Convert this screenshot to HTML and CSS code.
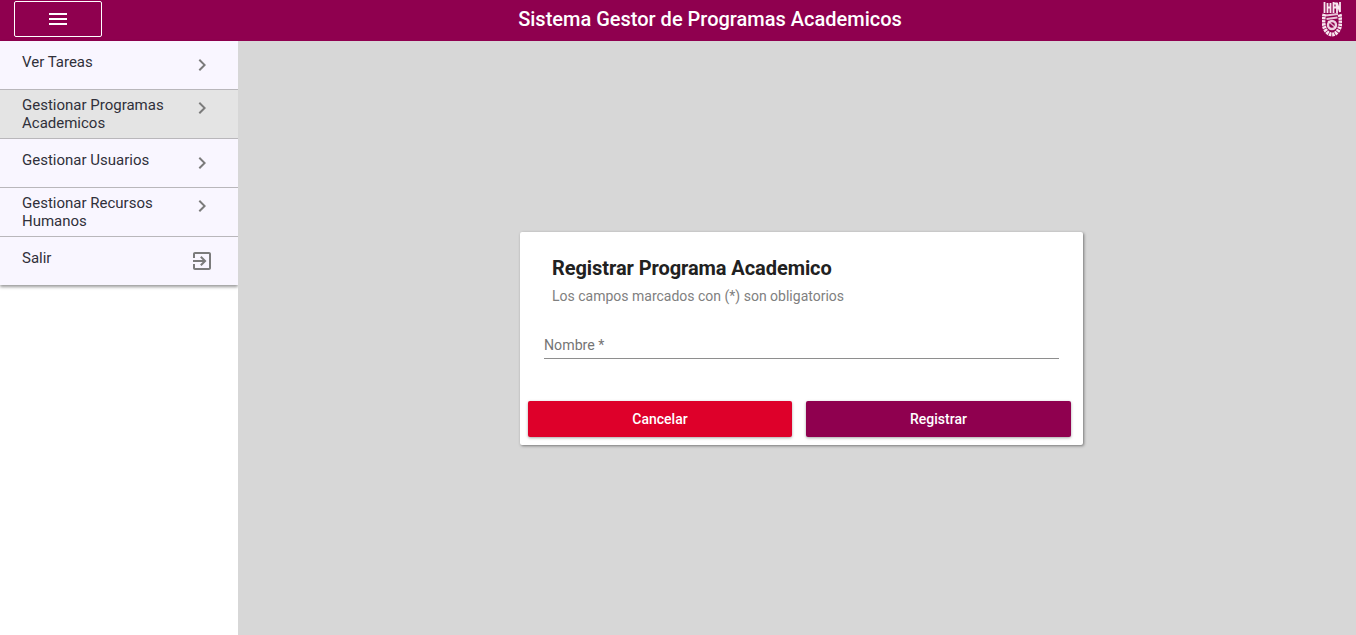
FILE: index.html
```html
<!DOCTYPE html>
<html lang="es">
<head>
<meta charset="utf-8">
<title>Sistema Gestor de Programas Academicos</title>
<link rel="stylesheet" href="styles.css">
</head>
<body>
<header class="topbar">
  <button class="menu-btn" type="button" aria-label="Menu">
    <svg width="18" height="12" viewBox="0 0 18 12"><path d="M0 0h18v2H0zM0 5h18v2H0zM0 10h18v2H0z" fill="#fff"/></svg>
  </button>
  <h1 class="app-title">Sistema Gestor de Programas Academicos</h1>
  <svg class="logo" width="20" height="36" viewBox="0 0 20 36" aria-hidden="true">
    <g fill="none" stroke="#f8e6f0">
      <path d="M2.500 1v11M5.500 2v10M5.500 6.500h3M8.500 2v10M11.500 1v11M11.500 2.500h3v4h-3M15 12V2l3 9V1" stroke-width="1.800"/>
      <path d="M2.500 13c-1.800 6-1.500 13 2 17.500 3 4 8 4 11 0 3.500-4.500 3.800-11.500 2-17.500" stroke-width="4" stroke-dasharray="2.400 .7"/>
      <path d="M4 14.500 16 13M4.500 18 15.500 16.500" stroke-width="2" opacity=".85"/>
      <circle cx="10" cy="24" r="4" stroke-width="2.400" opacity=".9"/>
      <path d="M6 20l8 7" stroke-width="1.600" opacity=".75"/>
    </g>
  </svg>
</header>
<div class="layout">
  <nav class="sidebar">
    <ul class="menu">
      <li class="menu-item"><span class="menu-label">Ver Tareas</span><svg class="chev" width="24" height="24" viewBox="0 0 24 24"><path d="M8.600 16.600 13.200 12 8.600 7.400 10 6l6 6-6 6z"/></svg></li>
      <li class="menu-item is-active"><span class="menu-label">Gestionar Programas Academicos</span><svg class="chev" width="24" height="24" viewBox="0 0 24 24"><path d="M8.600 16.600 13.200 12 8.600 7.400 10 6l6 6-6 6z"/></svg></li>
      <li class="menu-item"><span class="menu-label">Gestionar Usuarios</span><svg class="chev" width="24" height="24" viewBox="0 0 24 24"><path d="M8.600 16.600 13.200 12 8.600 7.400 10 6l6 6-6 6z"/></svg></li>
      <li class="menu-item"><span class="menu-label">Gestionar Recursos Humanos</span><svg class="chev" width="24" height="24" viewBox="0 0 24 24"><path d="M8.600 16.600 13.200 12 8.600 7.400 10 6l6 6-6 6z"/></svg></li>
      <li class="menu-item"><span class="menu-label">Salir</span><svg class="chev" width="24" height="24" viewBox="0 0 24 24"><path d="M10.090 15.590 11.500 17l5-5-5-5-1.410 1.410L12.670 11H3v2h9.670zM19 3H5c-1.110 0-2 .9-2 2v4h2V5h14v14H5v-4H3v4c0 1.100.89 2 2 2h14c1.100 0 2-.9 2-2V5c0-1.100-.9-2-2-2z"/></svg></li>
    </ul>
  </nav>
  <main class="content">
    <section class="card">
      <h2 class="card-title">Registrar Programa Academico</h2>
      <p class="card-subtitle">Los campos marcados con (*) son obligatorios</p>
      <div class="field"><span class="field-label">Nombre *</span></div>
      <div class="actions">
        <button class="btn btn-cancel" type="button">Cancelar</button>
        <button class="btn btn-submit" type="button">Registrar</button>
      </div>
    </section>
  </main>
</div>
</body>
</html>
```
FILE: styles.css
```css
* { box-sizing: border-box; }
html, body { height: 100%; }
body {
  margin: 0;
  font-family: Roboto, "Liberation Sans", sans-serif;
  color: #212121;
  background: #fff;
  overflow: hidden;
  display: flex;
  flex-direction: column;
}
.topbar {
  flex: 0 0 41px;
  height: 41px;
  background: #8f004f;
  display: grid;
  grid-template-columns: 1fr auto 1fr;
  align-items: center;
  padding: 0 14px;
}
.menu-btn {
  width: 88px;
  height: 36px;
  margin-top: -4px;
  background: transparent;
  border: 1px solid #fff;
  border-radius: 2px;
  padding: 0;
  display: flex;
  align-items: center;
  justify-content: center;
}
.app-title {
  margin: -4px 0 0 64px;
  font-size: 20px;
  font-weight: 500;
  color: #fff;
  line-height: 24px;
}
.logo { justify-self: end; margin-right: 0; margin-top: -4px; }
.layout { flex: 1; display: flex; min-height: 0; }
.sidebar { flex: 0 0 238px; width: 238px; background: #fff; }
.menu {
  list-style: none;
  margin: 0;
  padding: 0;
  background: #f9f6ff;
  box-shadow: 0 2px 3px rgba(0,0,0,.4);
}
.menu-item {
  height: 49px;
  display: flex;
  align-items: flex-start;
  justify-content: space-between;
  padding: 12px 24px 0 22px;
  border-bottom: 1px solid #b9b7bb;
  font-size: 15px;
  line-height: 18px;
  color: #30303a;
}
.menu-item:last-child { border-bottom: 0; height: 48px; }
.menu-item.is-active { background: #e4e4e4; }
.menu-label { width: 150px; }
.menu-item:nth-child(even) { padding-top: 6px; }
.chev { flex: none; fill: #7b7b7b; }
.content {
  flex: 1;
  background: #d7d7d7;
  display: flex;
  align-items: center;
  justify-content: center;
  padding-left: 9px;
}
.card {
  width: 563px;
  height: 213px;
  background: #fff;
  border-radius: 2px;
  box-shadow: 1px 1px 3px rgba(0,0,0,.45);
  padding: 24px 12px 8px 8px;
  display: flex;
  flex-direction: column;
}
.card-title {
  margin: 0 0 0 24px;
  font-size: 20px;
  line-height: 24px;
  font-weight: 700;
  letter-spacing: -0.07px;
  color: #212121;
}
.card-subtitle {
  margin: 8px 0 0 24px;
  font-size: 14px;
  line-height: 16px;
  color: #808080;
}
.field {
  margin: 32px 12px 0 16px;
  height: 23px;
  border-bottom: 1px solid #8e8e8e;
  font-size: 14.200px;
  line-height: 18px;
  color: #757575;
}
.actions {
  margin-top: auto;
  display: grid;
  grid-template-columns: 264px 265px;
  column-gap: 14px;
}
.btn {
  height: 36px;
  border: 0;
  border-radius: 2px;
  color: #fff;
  font: 500 14px/36px Roboto, "Liberation Sans", sans-serif;
  box-shadow: 0 1px 3px rgba(0,0,0,.35);
  padding: 0;
}
.btn-cancel { background: #de002a; }
.btn-submit { background: #8f004f; }
```
